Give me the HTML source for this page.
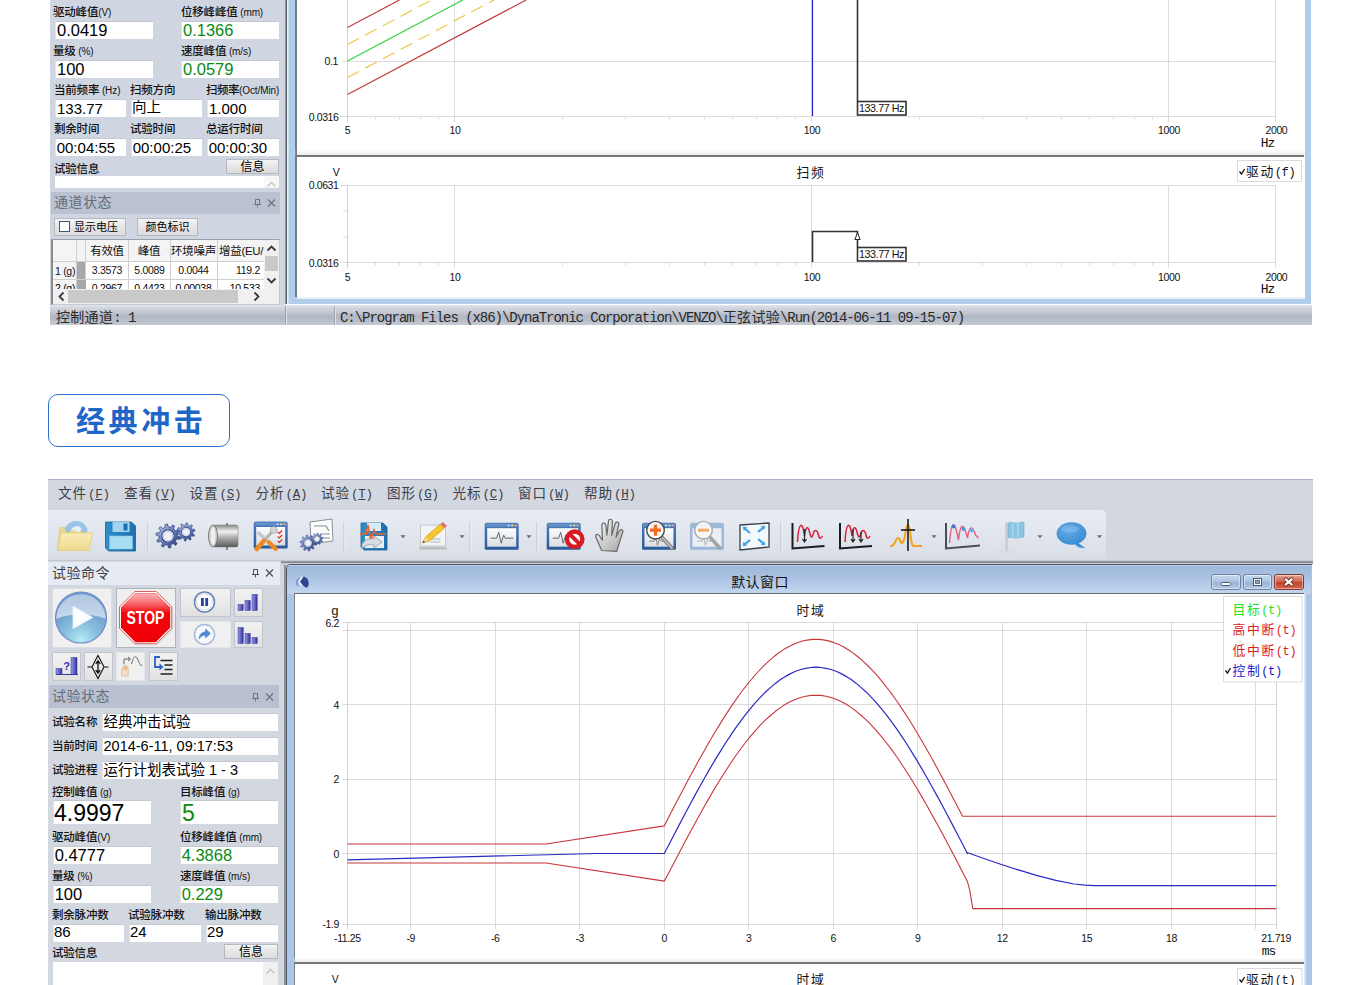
<!DOCTYPE html>
<html lang="zh"><head><meta charset="utf-8"><title>VENZO</title>
<style>
*{box-sizing:border-box;margin:0;padding:0}
html,body{width:1360px;height:985px;overflow:hidden;background:#fff}
body{position:relative;font-family:"Liberation Sans","Noto Sans CJK SC",sans-serif;color:#000}
.a{position:absolute}
.t{position:absolute;white-space:nowrap;line-height:1}
.lbl{position:absolute;white-space:nowrap;font-size:11.5px;line-height:14px;height:14px;color:#111;letter-spacing:-0.2px;font-weight:500}
.lbl i{font-style:normal;font-weight:400;font-size:10px;letter-spacing:-0.1px}
.inp{position:absolute;background:#fff;white-space:nowrap;overflow:hidden;border-top:1px solid #c3c8d2;border-left:1px solid #dfe3ea}
.inp span{position:absolute;left:2px;top:0;line-height:1}
.g{color:#0b8a12}
.hdr{position:absolute;font-size:14px;letter-spacing:0.5px;line-height:1;white-space:nowrap}
.btn{position:absolute;background:linear-gradient(#f4f4f4,#e6e6e6 50%,#dcdcdc);border:1px solid #b4b8c0;font-size:12px;text-align:center;white-space:nowrap}
.mono{font-family:"Liberation Mono","Noto Sans CJK SC",monospace}
.ax{font-size:10.5px;fill:#111;letter-spacing:-0.4px;font-family:"Liberation Sans","Noto Sans CJK SC",sans-serif}
svg{position:absolute;overflow:visible}
svg text{white-space:pre}
</style></head>
<body>
<div class="a" style="left:50px;top:0px;width:235px;height:305px;background:#d0d6e1"></div>
<div class="a" style="left:288px;top:0px;width:1022.5px;height:304px;background:#b1cdec"></div>
<div class="a" style="left:296px;top:0px;width:1009px;height:297px;background:#fff"></div>
<div class="a" style="left:296px;top:150px;width:1009px;height:5px;background:linear-gradient(#fff,#ececec)"></div>
<div class="a" style="left:296px;top:155px;width:1007.5px;height:2px;background:#777"></div>
<div class="a" style="left:296px;top:297px;width:1009px;height:1.5px;background:#e9f1fa"></div>
<div class="a" style="left:284px;top:0px;width:13px;height:150px;background:linear-gradient(90deg,#d0d6e1 0,#d0d6e1 .8px,#9a9ea6 .8px,#8d9199 1.8px,#5c6068 2px,#5c6068 3.3px,#e8f2fb 3.5px,#e8f2fb 4.4px,#b1cdec 4.6px,#b1cdec 11.2px,#737a85 11.3px,#737a85 12.8px,#fff 12.9px)"></div>
<div class="a" style="left:284px;top:150px;width:13px;height:7px;background:linear-gradient(90deg,#d0d6e1 0,#d0d6e1 .8px,#9a9ea6 .8px,#8d9199 1.8px,#5c6068 2px,#5c6068 3.3px,#e8f2fb 3.5px,#e8f2fb 4.4px,#b1cdec 4.6px,#b1cdec 11.2px,#8a9099 11.3px,#777 12.8px)"></div>
<div class="a" style="left:284px;top:157px;width:13px;height:140px;background:linear-gradient(90deg,#d0d6e1 0,#d0d6e1 .8px,#9a9ea6 .8px,#8d9199 1.8px,#5c6068 2px,#5c6068 3.3px,#e8f2fb 3.5px,#e8f2fb 4.4px,#b1cdec 4.6px,#b1cdec 11.2px,#737a85 11.3px,#737a85 12.8px,#fff 12.9px)"></div>
<div class="a" style="left:284px;top:297px;width:13px;height:7px;background:linear-gradient(90deg,#d0d6e1 0,#d0d6e1 .8px,#9a9ea6 .8px,#8d9199 1.8px,#5c6068 2px,#5c6068 3.3px,#e8f2fb 3.5px,#e8f2fb 4.4px,#b1cdec 4.6px)"></div>
<div class="lbl" style="left:53px;top:5px;">驱动峰值<i>(V)</i></div>
<div class="lbl" style="left:181px;top:5px;">位移峰峰值<i> (mm)</i></div>
<div class="inp" style="left:55px;top:21px;width:98px;height:18px"><span style="font-size:16.5px;top:0.2px;left:1px">0.0419</span></div>
<div class="inp" style="left:181px;top:21px;width:98px;height:18px"><span class="g" style="font-size:16.5px;top:0.2px;left:1px">0.1366</span></div>
<div class="lbl" style="left:53px;top:44px;">量级<i> (%)</i></div>
<div class="lbl" style="left:181px;top:44px;">速度峰值<i> (m/s)</i></div>
<div class="inp" style="left:55px;top:60px;width:98px;height:18px"><span style="font-size:16.5px;top:0.2px;left:1px">100</span></div>
<div class="inp" style="left:181px;top:60px;width:98px;height:18px"><span class="g" style="font-size:16.5px;top:0.2px;left:1px">0.0579</span></div>
<div class="lbl" style="left:54px;top:83px;">当前频率<i> (Hz)</i></div>
<div class="lbl" style="left:130px;top:83px;">扫频方向</div>
<div class="lbl" style="left:206px;top:83px;letter-spacing:-0.5px">扫频率<i>(Oct/Min)</i></div>
<div class="inp" style="left:55px;top:99px;width:71px;height:18px"><span style="font-size:15px;top:1.0px;left:1px">133.77</span></div>
<div class="inp" style="left:131px;top:99px;width:71px;height:18px"><span style="font-size:14.5px;top:0.2px;left:0px">向上</span></div>
<div class="inp" style="left:207px;top:99px;width:72px;height:18px"><span style="font-size:15px;top:1.0px;left:1px">1.000</span></div>
<div class="lbl" style="left:54px;top:122px;">剩余时间</div>
<div class="lbl" style="left:130px;top:122px;">试验时间</div>
<div class="lbl" style="left:206px;top:122px;">总运行时间</div>
<div class="inp" style="left:55px;top:138px;width:71px;height:18px"><span style="font-size:15px;top:1.0px;left:0.7px">00:04:55</span></div>
<div class="inp" style="left:131px;top:138px;width:71px;height:18px"><span style="font-size:15px;top:1.0px;left:0.7px">00:00:25</span></div>
<div class="inp" style="left:207px;top:138px;width:72px;height:18px"><span style="font-size:15px;top:1.0px;left:0.7px">00:00:30</span></div>
<div class="lbl" style="left:54px;top:162px;">试验信息</div>
<div class="btn" style="left:226px;top:159px;width:53px;height:15px;line-height:15px;font-size:12px">信息</div>
<div class="a" style="left:55px;top:176px;width:224px;height:12px;background:#fff"></div>
<div class="a" style="left:264px;top:176px;width:15px;height:12px;background:#f7f7f7"></div>
<svg style="left:266px;top:180px" width="11" height="8"><path d="M1.5 6.5 L5.5 2.5 L9.5 6.5" fill="none" stroke="#c4c4c4" stroke-width="1.3"/></svg>
<div class="a" style="left:51px;top:192px;width:229px;height:22px;background:#bac2d1"></div>
<div class="hdr" style="left:54px;top:195px;color:#666c78">通道状态</div>
<svg style="left:252px;top:197px" width="26" height="12"><g fill="none" stroke="#6d7480" stroke-width="1"><path d="M3.5 2.5h4v5h-4z M2 7.5h7 M5.5 7.5v3"/><path d="M16 2.5l7 7M23 2.5l-7 7" stroke-width="1.2"/></g></svg>
<div class="btn" style="left:54px;top:218px;width:72px;height:18px;line-height:16px;font-size:11.5px;padding-left:19px;text-align:left;font-size:11px">显示电压</div>
<div class="a" style="left:59px;top:221px;width:11px;height:11px;background:#fff;border:1px solid #3c5a78"></div>
<div class="btn" style="left:137px;top:218px;width:61px;height:18px;line-height:16px;font-size:11px">颜色标识</div>
<div class="a" style="left:51px;top:239px;width:229px;height:66px;background:#fff;border:1px solid #9aa0aa;border-left:2px solid #8c8c8c;border-right-color:#c5c9d0;border-bottom-color:#c5c9d0"></div>
<div class="a" style="left:53px;top:240px;width:211px;height:21px;background:#f4f4f4"></div>
<div class="a" style="left:53px;top:261px;width:24px;height:28px;background:#f4f4f4"></div>
<div class="a" style="left:77px;top:261px;width:9px;height:28px;background:#a8a8a8"></div>
<div class="a" style="left:76px;top:240px;width:1px;height:49px;background:#cfcfcf"></div>
<div class="a" style="left:85px;top:240px;width:1px;height:49px;background:#cfcfcf"></div>
<div class="a" style="left:128px;top:240px;width:1px;height:49px;background:#cfcfcf"></div>
<div class="a" style="left:170px;top:240px;width:1px;height:49px;background:#cfcfcf"></div>
<div class="a" style="left:217px;top:240px;width:1px;height:49px;background:#cfcfcf"></div>
<div class="a" style="left:53px;top:261px;width:211px;height:1px;background:#cfcfcf"></div>
<div class="a" style="left:53px;top:279px;width:211px;height:1px;background:#cfcfcf"></div>
<div class="t" style="left:107px;top:246.2px;font-size:11.5px;transform:translate(-50%,0);color:#111;letter-spacing:-0.3px">有效值</div>
<div class="t" style="left:149px;top:246.2px;font-size:11.5px;transform:translate(-50%,0);color:#111;letter-spacing:-0.3px">峰值</div>
<div class="t" style="left:193.5px;top:246.2px;font-size:11.5px;transform:translate(-50%,0);color:#111;letter-spacing:-0.3px">环境噪声</div>
<div class="t" style="left:219px;top:246.2px;font-size:11.5px;transform:none;color:#111;letter-spacing:-0.3px">增益(EU/</div>
<div class="t" style="left:55px;top:265.8px;font-size:10.5px;transform:none;color:#111;letter-spacing:-0.3px">1 (g)</div>
<div class="t" style="left:107px;top:265.2px;font-size:10.5px;transform:translate(-50%,0);color:#111;letter-spacing:-0.3px">3.3573</div>
<div class="t" style="left:149.5px;top:265.2px;font-size:10.5px;transform:translate(-50%,0);color:#111;letter-spacing:-0.3px">5.0089</div>
<div class="t" style="left:193.5px;top:265.2px;font-size:10.5px;transform:translate(-50%,0);color:#111;letter-spacing:-0.3px">0.0044</div>
<div class="t" style="left:260px;top:265.2px;font-size:10.5px;transform:translate(-100%,0);color:#111;letter-spacing:-0.3px">119.2</div>
<div class="a" style="left:54px;top:280px;width:210px;height:8.500px;overflow:hidden"><div class="t" style="left:1px;top:2.5px;font-size:10.5px;letter-spacing:-0.3px">2 (g)</div><div class="t" style="left:53px;top:2.5px;font-size:10.5px;transform:translate(-50%,0);letter-spacing:-0.3px">0.2967</div><div class="t" style="left:95.5px;top:2.5px;font-size:10.5px;transform:translate(-50%,0);letter-spacing:-0.3px">0.4423</div><div class="t" style="left:139.5px;top:2.5px;font-size:10.5px;transform:translate(-50%,0);letter-spacing:-0.3px">0.00038</div><div class="t" style="left:206px;top:2.5px;font-size:10.5px;transform:translate(-100%,0);letter-spacing:-0.3px">10.533</div></div>
<div class="a" style="left:77px;top:280px;width:9px;height:9px;background:#a8a8a8"></div>
<div class="a" style="left:264px;top:240px;width:15px;height:49px;background:#f0f0f0"></div>
<div class="a" style="left:265px;top:256px;width:13px;height:15px;background:#c9c9c9"></div>
<svg style="left:266px;top:243px" width="11" height="46"><g fill="none" stroke="#3a3a3a" stroke-width="1.800"><path d="M1.5 7.5L5.5 3.5L9.5 7.5"/><path d="M1.5 35.5L5.5 39.5L9.5 35.5"/></g></svg>
<div class="a" style="left:53px;top:289px;width:226px;height:15px;background:#f0f0f0"></div>
<div class="a" style="left:68px;top:290px;width:170px;height:13px;background:#c9c9c9"></div>
<svg style="left:56px;top:291px" width="210" height="11"><g fill="none" stroke="#3a3a3a" stroke-width="1.800"><path d="M7.5 1.5L3.5 5.5L7.5 9.5"/><path d="M198.5 1.5L202.5 5.5L198.5 9.5"/></g></svg>
<div class="a" style="left:50px;top:305px;width:1262px;height:20px;background:linear-gradient(#e3e6ec 0,#d3d7df 12%,#c0c5cf 40%,#b1b7c3 55%,#b9bfca 80%,#c6cbd4 100%)"></div>
<div class="a" style="left:285px;top:306px;width:1px;height:19px;background:#9da3ad"></div>
<div class="a" style="left:286px;top:306px;width:1px;height:19px;background:#e0e3e9"></div>
<div class="a" style="left:334px;top:306px;width:1px;height:19px;background:#9da3ad"></div>
<div class="a" style="left:335px;top:306px;width:1px;height:19px;background:#e0e3e9"></div>
<div class="t mono" style="left:56px;top:310.500px;font-size:14px;color:#2a2a2a;letter-spacing:0.3px">控制通道<span style="letter-spacing:-1px">: 1</span></div>
<div class="t mono" style="left:340px;top:310.500px;font-size:14px;color:#2a2a2a;letter-spacing:-1.04px">C:\Program Files (x86)\DynaTronic Corporation\VENZO\<span style="letter-spacing:0.3px">正弦试验</span>\Run(2014-06-11 09-15-07)</div>
<svg style="left:0;top:0" width="1360" height="330" viewBox="0 0 1360 330">
<g stroke="#dcdcdc" stroke-width="1" fill="none"><path d="M454.5 0V122"/><path d="M811.5 0V122"/><path d="M1168.5 0V122"/><path d="M1275.5 0V122"/><path d="M347.5 61.5H1275.5"/><path d="M340 116.5H1275.5"/><path d="M347.5 0V122" stroke="#d2d2d2"/><path d="M375.5 116.5v3"/><path d="M375.5 262.5v3"/><path d="M399.5 116.5v3"/><path d="M399.5 262.5v3"/><path d="M420.5 116.5v3"/><path d="M420.5 262.5v3"/><path d="M438.5 116.5v3"/><path d="M438.5 262.5v3"/><path d="M562.5 116.5v3"/><path d="M562.5 262.5v3"/><path d="M625.5 116.5v3"/><path d="M625.5 262.5v3"/><path d="M669.5 116.5v3"/><path d="M669.5 262.5v3"/><path d="M704.5 116.5v3"/><path d="M704.5 262.5v3"/><path d="M732.5 116.5v3"/><path d="M732.5 262.5v3"/><path d="M756.5 116.5v3"/><path d="M756.5 262.5v3"/><path d="M777.5 116.5v3"/><path d="M777.5 262.5v3"/><path d="M795.5 116.5v3"/><path d="M795.5 262.5v3"/><path d="M919.5 116.5v3"/><path d="M919.5 262.5v3"/><path d="M982.5 116.5v3"/><path d="M982.5 262.5v3"/><path d="M1026.5 116.5v3"/><path d="M1026.5 262.5v3"/><path d="M1061.5 116.5v3"/><path d="M1061.5 262.5v3"/><path d="M1089.5 116.5v3"/><path d="M1089.5 262.5v3"/><path d="M1113.5 116.5v3"/><path d="M1113.5 262.5v3"/><path d="M1134.5 116.5v3"/><path d="M1134.5 262.5v3"/><path d="M1152.5 116.5v3"/><path d="M1152.5 262.5v3"/><path d="M342 61.5h5"/></g>
<path d="M347.5 27.5L399.5 0" stroke="#c23a3a" stroke-width="1.2" fill="none"/><path d="M347.5 44.5L431.6 0" stroke="#ecc84a" stroke-width="1.2" fill="none" stroke-dasharray="13 7"/><path d="M347.5 61L462.8 0" stroke="#35d23c" stroke-width="1.2" fill="none"/><path d="M347.5 77.5L494.0 0" stroke="#ecc84a" stroke-width="1.2" fill="none" stroke-dasharray="13 7"/><path d="M347.5 94.5L526.1 0" stroke="#c23a3a" stroke-width="1.2" fill="none"/><path d="M812.5 0V116" stroke="#2424c8" stroke-width="1.2"/><path d="M857.5 0V101" stroke="#333" stroke-width="1.600"/><rect x="857.5" y="101.5" width="48.5" height="13.5" fill="#fff" stroke="#333" stroke-width="1.600"/><text class="ax" x="859" y="112.3" font-size="10.5" textLength="45" lengthAdjust="spacingAndGlyphs">133.77 Hz</text><text class="ax" x="338" y="65" text-anchor="end">0.1</text><text class="ax" x="338.5" y="120.5" text-anchor="end">0.0316</text><text class="ax" x="347.5" y="134" text-anchor="middle">5</text><text class="ax" x="347.5" y="280.5" text-anchor="middle">5</text><text class="ax" x="455.0" y="134" text-anchor="middle">10</text><text class="ax" x="455.0" y="280.5" text-anchor="middle">10</text><text class="ax" x="812.0" y="134" text-anchor="middle">100</text><text class="ax" x="812.0" y="280.5" text-anchor="middle">100</text><text class="ax" x="1169.0" y="134" text-anchor="middle">1000</text><text class="ax" x="1169.0" y="280.5" text-anchor="middle">1000</text><text class="ax" x="1276.4" y="134" text-anchor="middle">2000</text><text class="ax" x="1276.4" y="280.5" text-anchor="middle">2000</text><text class="mono" x="1267.5" y="146.5" text-anchor="middle" font-size="13" fill="#111" style="letter-spacing:-1px">Hz</text><text class="mono" x="1267.5" y="292.5" text-anchor="middle" font-size="13" fill="#111" style="letter-spacing:-1px">Hz</text><g stroke="#dcdcdc" stroke-width="1" fill="none"><path d="M454.5 185.5V268"/><path d="M811.5 185.5V268"/><path d="M1168.5 185.5V268"/><path d="M1275.5 185.5V268"/><path d="M340 185.5H1275.5"/><path d="M340 262.5H1275.5"/><path d="M347.5 185.5V268" stroke="#d2d2d2"/><path d="M343 211h4M343 237h4"/></g>
<text class="ax" x="336" y="175.5" text-anchor="middle" font-size="12">V</text><text class="ax" x="338.5" y="189" text-anchor="end">0.0631</text><text class="ax" x="338.5" y="266.5" text-anchor="end">0.0316</text><text x="811" y="176.5" text-anchor="middle" font-size="12.800" fill="#111" class="mono" style="letter-spacing:1.700px">扫频</text><path d="M812.5 262V231.5H857.5V247" stroke="#333" stroke-width="1.600" fill="none"/><path d="M857.5 232.5l2.6 7h-5.2z" fill="#fff" stroke="#222" stroke-width="1"/><rect x="857.5" y="247.5" width="48.5" height="13.5" fill="#fff" stroke="#333" stroke-width="1.600"/><text class="ax" x="859" y="258.3" font-size="10.5" textLength="45" lengthAdjust="spacingAndGlyphs">133.77 Hz</text><rect x="1237.5" y="160.5" width="64" height="21" fill="#fff" stroke="#dadada"/><path d="M1239.5 171.5l2 2.5l3-5" stroke="#111" stroke-width="1.3" fill="none"/><text x="1246" y="175.500" font-size="12.800" fill="#111" class="mono" style="letter-spacing:1.700px">驱动<tspan dx="-0.300" font-size="12" style="letter-spacing:-0.300px">(f)</tspan></text></svg>
<div class="a" style="left:48px;top:394px;width:182px;height:52.600px;border:1.5px solid #2a72cf;border-radius:10px;background:#fff"></div>
<div class="t" style="left:76px;top:408.400px;font-size:29px;font-weight:bold;color:#1f66c9;letter-spacing:3.600px;font-family:'Liberation Sans','Noto Sans CJK SC',sans-serif">经典冲击</div>
<div class="a" style="left:48px;top:479px;width:1265px;height:84px;background:#d2d7e0"></div>
<div class="a" style="left:48px;top:563px;width:1263.5px;height:422px;background:#d2d7e0"></div>
<div class="a" style="left:48px;top:479px;width:1265px;height:1px;background:#aab4c4"></div>
<div class="t mono" style="left:58px;top:488.200px;font-size:13.600px;color:#3a3f48;letter-spacing:0.900px">文件<span style="font-size:12.500px;letter-spacing:-0.300px;margin-left:1px">(<u>F</u>)</span></div>
<div class="t mono" style="left:124px;top:488.200px;font-size:13.600px;color:#3a3f48;letter-spacing:0.900px">查看<span style="font-size:12.500px;letter-spacing:-0.300px;margin-left:1px">(<u>V</u>)</span></div>
<div class="t mono" style="left:189.5px;top:488.200px;font-size:13.600px;color:#3a3f48;letter-spacing:0.900px">设置<span style="font-size:12.500px;letter-spacing:-0.300px;margin-left:1px">(<u>S</u>)</span></div>
<div class="t mono" style="left:255.5px;top:488.200px;font-size:13.600px;color:#3a3f48;letter-spacing:0.900px">分析<span style="font-size:12.500px;letter-spacing:-0.300px;margin-left:1px">(<u>A</u>)</span></div>
<div class="t mono" style="left:321px;top:488.200px;font-size:13.600px;color:#3a3f48;letter-spacing:0.900px">试验<span style="font-size:12.500px;letter-spacing:-0.300px;margin-left:1px">(<u>T</u>)</span></div>
<div class="t mono" style="left:387px;top:488.200px;font-size:13.600px;color:#3a3f48;letter-spacing:0.900px">图形<span style="font-size:12.500px;letter-spacing:-0.300px;margin-left:1px">(<u>G</u>)</span></div>
<div class="t mono" style="left:452.5px;top:488.200px;font-size:13.600px;color:#3a3f48;letter-spacing:0.900px">光标<span style="font-size:12.500px;letter-spacing:-0.300px;margin-left:1px">(<u>C</u>)</span></div>
<div class="t mono" style="left:518px;top:488.200px;font-size:13.600px;color:#3a3f48;letter-spacing:0.900px">窗口<span style="font-size:12.500px;letter-spacing:-0.300px;margin-left:1px">(<u>W</u>)</span></div>
<div class="t mono" style="left:584px;top:488.200px;font-size:13.600px;color:#3a3f48;letter-spacing:0.900px">帮助<span style="font-size:12.500px;letter-spacing:-0.300px;margin-left:1px">(<u>H</u>)</span></div>
<div class="a" style="left:48px;top:510px;width:1058px;height:51px;background:linear-gradient(#e9edf4,#e1e6ee 50%,#d7dce6);border-radius:0 5px 5px 0"></div>
<div class="a" style="left:48px;top:560px;width:1265px;height:1px;background:#c3c7cf"></div>
<div class="a" style="left:281px;top:561px;width:1032px;height:2px;background:linear-gradient(#a4a9b1,#777c84)"></div>
<div class="a" style="left:281px;top:563px;width:1032px;height:2px;background:#c9ced8"></div>
<svg style="left:48px;top:510px" width="1060" height="52" viewBox="48 510 1060 52">
<defs>
<linearGradient id="fy" x1="0" y1="0" x2="0" y2="1"><stop offset="0" stop-color="#f8edb8"/><stop offset="1" stop-color="#efd98e"/></linearGradient>
<linearGradient id="fb" x1="0" y1="0" x2="1" y2="1"><stop offset="0" stop-color="#7fb6e6"/><stop offset="1" stop-color="#3e86cc"/></linearGradient>
<linearGradient id="sv" x1="0" y1="0" x2="1" y2="0"><stop offset="0" stop-color="#2f8fca"/><stop offset="1" stop-color="#1f6fae"/></linearGradient>
<linearGradient id="gr" x1="0" y1="0" x2="1" y2="1"><stop offset="0" stop-color="#c9d6ee"/><stop offset=".45" stop-color="#6f86c2"/><stop offset="1" stop-color="#26377a"/></linearGradient>
<linearGradient id="cy" x1="0" y1="0" x2="0" y2="1"><stop offset="0" stop-color="#8a8a8a"/><stop offset=".3" stop-color="#f2f2f2"/><stop offset=".6" stop-color="#a8a8a8"/><stop offset="1" stop-color="#5a5a5a"/></linearGradient>
<linearGradient id="wn" x1="0" y1="0" x2="0" y2="1"><stop offset="0" stop-color="#4a7cbc"/><stop offset="1" stop-color="#2b5a98"/></linearGradient>
<linearGradient id="wb" x1="0" y1="0" x2="0" y2="1"><stop offset="0" stop-color="#fdfdfd"/><stop offset="1" stop-color="#d9dde2"/></linearGradient>
<linearGradient id="hd" x1="0" y1="0" x2="1" y2="1"><stop offset="0" stop-color="#fafafa"/><stop offset="1" stop-color="#a9a9a9"/></linearGradient>
<radialGradient id="bb" cx="40%" cy="35%" r="70%"><stop offset="0" stop-color="#62aae4"/><stop offset="1" stop-color="#3a8cd4"/></radialGradient>
<g id="dd"><path d="M-2.600 -1.200h5.200l-2.600 3z" fill="#666c77"/></g>
<g id="win"><path d="M-17 -11.500q0-2 2-2h30q2 0 2 2v23.500q0 1.500-1.500 1.500h-31q-1.500 0-1.500-1.500z" fill="url(#wn)"/><path d="M-16 -12.500h32v3h-32z" fill="#7fa3d4" opacity=".55"/><rect x="-14.500" y="-8" width="29" height="18.500" fill="url(#wb)"/><circle cx="7" cy="-10.700" r="1.100" fill="#b9dcff"/><circle cx="10.500" cy="-10.700" r="1.100" fill="#ffd76a"/><circle cx="14" cy="-10.700" r="1.100" fill="#ff9a6a"/></g>
<g id="gear"><path d="M7.60 0.00L9.97 0.75L9.65 2.61L7.17 2.53L6.15 4.47L7.62 6.47L6.28 7.78L4.31 6.26L2.35 7.23L2.36 9.72L0.50 9.99L-0.19 7.60L-2.35 7.23L-3.80 9.25L-5.46 8.38L-4.62 6.03L-6.15 4.47L-8.51 5.25L-9.34 3.56L-7.28 2.17L-7.60 0.00L-9.97 -0.75L-9.65 -2.61L-7.17 -2.53L-6.15 -4.47L-7.62 -6.47L-6.28 -7.78L-4.31 -6.26L-2.35 -7.23L-2.36 -9.72L-0.50 -9.99L0.19 -7.60L2.35 -7.23L3.80 -9.25L5.46 -8.38L4.62 -6.03L6.15 -4.47L8.51 -5.25L9.34 -3.56L7.28 -2.17z" fill="url(#gr)" stroke="#2b3a78" stroke-width=".6" stroke-linejoin="round"/><circle r="5.200" fill="#eef1f7" stroke="#34447f" stroke-width=".9"/><circle r="3.800" fill="none" stroke="#b9c3dc" stroke-width=".8"/></g>
</defs>
<path d="M148 522v29" stroke="#b9bec8" stroke-width="1"/><path d="M149 522v29" stroke="#f3f5f9" stroke-width="1"/><path d="M344 522v29" stroke="#b9bec8" stroke-width="1"/><path d="M345 522v29" stroke="#f3f5f9" stroke-width="1"/><path d="M470 522v29" stroke="#b9bec8" stroke-width="1"/><path d="M471 522v29" stroke="#f3f5f9" stroke-width="1"/><path d="M537 522v29" stroke="#b9bec8" stroke-width="1"/><path d="M538 522v29" stroke="#f3f5f9" stroke-width="1"/><path d="M781 522v29" stroke="#b9bec8" stroke-width="1"/><path d="M782 522v29" stroke="#f3f5f9" stroke-width="1"/><use href="#dd" x="403" y="536.500"/><use href="#dd" x="462" y="536.500"/><use href="#dd" x="529" y="536.500"/><use href="#dd" x="934" y="536.500"/><use href="#dd" x="1040" y="536.500"/><use href="#dd" x="1099.5" y="536.500"/><g transform="translate(74.500 535.500)"><path d="M-17 14l2-22h8l2.500 3h17l-1 19z" fill="#ecd88e" stroke="#dcc47a" stroke-width=".6"/><path d="M-10 -5c2-9 12-12 19-7c3 2 4 5 4 8l-6 1c0-5-5-7-9-4c-2 1-3 3-3 5z" fill="#8fc0e8" opacity=".9"/><path d="M-3 -6c2-4 7-5 10-1l-2 4z" fill="#e6f1fa"/><path d="M-13.500 -2.500h31.500l-3.500 17.500h-31.500z" fill="url(#fy)" stroke="#e0c878" stroke-width=".7"/></g><g transform="translate(120.500 536)"><path d="M-15 -14h26l4 4v25h-27l-3 -3z" fill="url(#sv)" stroke="#1a5f98" stroke-width=".8"/><rect x="-8" y="-14" width="17" height="10" fill="#9fd3ee"/><rect x="3" y="-12.500" width="4" height="7" fill="#1f6fae"/><rect x="-11" y="0" width="23" height="13" fill="#a8ddf2" stroke="#7cc2e4" stroke-width=".6"/></g><g transform="translate(168 536) scale(1.200)"><use href="#gear"/></g><g transform="translate(186 532) scale(.900) rotate(14)"><use href="#gear"/></g><g transform="translate(224 536)"><rect x="-11" y="-11" width="25" height="22" rx="2" fill="url(#cy)" stroke="#777" stroke-width=".5"/><ellipse cx="-11" cy="0" rx="4.500" ry="11" fill="#c9c9c9" stroke="#6a6a6a" stroke-width=".8"/><ellipse cx="-11" cy="0" rx="2.500" ry="9" fill="#eee"/><path d="M3 -13v2M3 11v3" stroke="#666" stroke-width="1.500"/></g><g transform="translate(270.700 535)"><use href="#win"/><path d="M7 -3l1.500 1.500l3-3M7 1.500l1.500 1.500l3-3M7 6l1.500 1.500l3-3" fill="none" stroke="#d03030" stroke-width="1.200"/><path d="M-12 -2l16 15" stroke="#c8c8c8" stroke-width="3.500" stroke-linecap="round"/><path d="M-2 7l7 7" stroke="#f08a1c" stroke-width="4" stroke-linecap="round"/><path d="M2 -4l-14 16" stroke="#b5b5b5" stroke-width="3" stroke-linecap="round"/><path d="M-7 6l-7 8" stroke="#f08a1c" stroke-width="4.500" stroke-linecap="round"/><circle cx="3" cy="-5" r="3.500" fill="#d5d5d5" stroke="#9a9a9a" stroke-width=".6"/></g><g transform="translate(317 535)"><path d="M-7 -13l22-3l1 22l-22 3z" fill="#fbfbfb" stroke="#8a8f98" stroke-width="1"/><path d="M-3 -9h12l3 5M3 -1h10M3 3h10" fill="none" stroke="#8a919c" stroke-width="1.200"/><g transform="translate(-9 8) scale(.800)"><use href="#gear"/></g><g transform="translate(0 4) scale(.600) rotate(15)"><use href="#gear"/></g></g><g transform="translate(374 536)"><path d="M-13 -13h22l4 4v23h-23l-3 -3z" fill="url(#sv)" stroke="#1a5f98" stroke-width=".8"/><rect x="-7" y="-13" width="14" height="8" fill="#d6ecf8"/><rect x="-9" y="0" width="19" height="12" fill="#e8eef2"/><path d="M-14 -2h6l2-9l3 16l3-11l2 4h10" fill="none" stroke="#f0642a" stroke-width="1.600"/><path d="M-12 8c3-5 8-6 12-5v-3l8 6l-8 6v-3c-5-1-9 0-12 4z" fill="#d8dde2" stroke="#8a929c" stroke-width=".7"/></g><g transform="translate(432.500 536)"><path d="M-12 -11h22l3 3v18h-25z" fill="#f4f4f4" stroke="#b9bcc2" stroke-width=".8"/><path d="M-13 11h27v2.500h-27z" fill="#bdbdbd"/><path d="M-4 3h12M-2 6h10" stroke="#a9b3c0" stroke-width="1.200"/><path d="M-10 7l3-6l15-13l4 4l-15 13z" fill="#f6c530" stroke="#c99a1a" stroke-width=".7"/><path d="M8 -12l2.500-2l4 4l-2.500 2z" fill="#e46a7a"/><path d="M-10 7l3-6l3 3.500z" fill="#f2d9b0"/><path d="M-10 7l1.200-2.400l1.300 1.400z" fill="#333"/></g><g transform="translate(501.700 536.200)"><use href="#win"/><path d="M-11 2h6l2-6l2.500 11l2.500-8l1.500 3h8" fill="none" stroke="#666" stroke-width="1"/></g><g transform="translate(563.700 536.200)"><use href="#win"/><path d="M-11 2h6l2-6l2.500 11l2.500-8l1.500 3h8" fill="none" stroke="#666" stroke-width="1"/><circle cx="11" cy="3" r="7.700" fill="#fff" stroke="#d81a22" stroke-width="4.400"/><path d="M5.500 -2.500l11 11" stroke="#d81a22" stroke-width="4"/></g><g transform="translate(612 536) scale(1.150 1.080) rotate(4)"><path d="M-8 14l-6-12c-1-2.500 1.500-3.500 3-1.500l3 4l-1.500-14c0-2.500 3-2.500 3.500 0l1.500 9l.5-13c0-2.500 3.200-2.500 3.400 0l.3 13l2.200-11c.5-2.500 3.500-2 3.200 .5l-1.600 12l2.500-6c1-2.500 3.800-1.500 3 1l-4 18z" fill="url(#hd)" stroke="#6d6d6d" stroke-width="1.100" stroke-linejoin="round"/></g><g transform="translate(659 536.200)"><use href="#win"/><path d="M-10 5h5l1.500-4l2 8l2-6l1.500 2h7" fill="none" stroke="#888" stroke-width="1"/><path d="M3 1l10 11" stroke="#7d7d7d" stroke-width="3.600" stroke-linecap="round"/><path d="M3 1l10 11" stroke="#c9c9c9" stroke-width="1.400" stroke-linecap="round"/><circle cx="-3.500" cy="-6" r="8.800" fill="#fdfdfd" fill-opacity=".9" stroke="#4a4a4a" stroke-width="1.400"/><path d="M-9 -6h11M-3.500 -11.500v11" stroke="#f26a1b" stroke-width="3.200"/></g><g transform="translate(707 536.200)" opacity=".85"><path d="M-17 -11.500q0-2 2-2h30q2 0 2 2v23.500q0 1.500-1.500 1.500h-31q-1.500 0-1.500-1.500z" fill="#90b0d8"/><rect x="-14.500" y="-8" width="29" height="18.500" fill="#eef1f5"/><path d="M-10 5h5l1.500-4l2 8l2-6l1.500 2h7" fill="none" stroke="#aaa" stroke-width="1"/><path d="M3 1l10 11" stroke="#9a9a9a" stroke-width="3.600" stroke-linecap="round"/><circle cx="-3.500" cy="-6" r="8.800" fill="#fdfdfd" fill-opacity=".9" stroke="#a0a0a0" stroke-width="1.400"/><path d="M-9 -6h11" stroke="#f2a04b" stroke-width="3"/></g><g transform="translate(754 536)"><path d="M-14 -11l29-2l0 24l-29 3z" fill="#f3f8fc" stroke="#3a3f47" stroke-width="1.300"/><g stroke="#3fa2e4" stroke-width="2.200" fill="#3fa2e4"><path d="M-4 -3l-6-5M4 -4l6-5M-4 4l-6 5M4 3l6 5"/><path d="M-11 -9l4 .300l-3 3.200zM11 -10l-4 .500l3.200 3zM-11 10l.500-4l3.200 3.200zM11 9l-4-.300l3.200-3z" stroke-width=".5"/></g></g><g transform="translate(807.500 536)"><path d="M-15 -13v25.500l32-2.500" fill="none" stroke="#1c1c1c" stroke-width="2"/><path d="M-10 6c1-20 5-22 7-6c1-8 3-12 5-4s3 5 4 1s4-3 5 2s3 3 4 1" fill="none" stroke="#d8203a" stroke-width="1.500"/><path d="M-3 -7v13M-5 3l2 3l2-3" fill="none" stroke="#222" stroke-width="1.200"/></g><g transform="translate(855 536)"><path d="M-15 -13v25.500l32-2.500" fill="none" stroke="#1c1c1c" stroke-width="2"/><path d="M-10 6c1-20 5-22 7-6c1-8 3-12 5-4s3 5 4 1s4-3 5 2s3 3 4 1" fill="none" stroke="#d8203a" stroke-width="1.500"/><path d="M-2 -7v13M-4 3l2 3l2-3M6 -4v10M4 3l2 3l2-3" fill="none" stroke="#222" stroke-width="1.200"/></g><g transform="translate(905 536)"><path d="M-15 10c6 1 5-8 8-8s2 8 5 4s2-17 5-17s2 22 6 21h8" fill="none" stroke="#f4a21c" stroke-width="2"/><path d="M3 -17v32M-4 -6h14" stroke="#111" stroke-width="1.500"/></g><g transform="translate(962.500 536)"><path d="M-16.500 -13v25.500l34-3" fill="none" stroke="#4a4d55" stroke-width="2"/><path d="M-13 7c2-24 5-24 9-3c2-18 5-18 9-2c2-13 5-13 8-3l3 3" fill="none" stroke="#e0607c" stroke-width="1.400"/><circle cx="-9" cy="-9.500" r="1.900" fill="#4a76c8"/><circle cx="1" cy="-7" r="1.900" fill="#5a8ed8"/><circle cx="9.500" cy="-5.500" r="1.900" fill="#59b4e8"/></g><g transform="translate(1013 536)"><ellipse cx="-6" cy="15" rx="8" ry="2" fill="#d8dce3"/><path d="M-6.500 -14v29" stroke="#c5c9d0" stroke-width="2.200"/><path d="M-5 -13c4-2 7 1 10 0s4-1 6-1v15c-3 0-4 1-6 1c-3 1-6-2-10 0z" fill="#8cc4e2" stroke="#6fb0d4" stroke-width=".6"/><path d="M0 -13.500v15M5 -13v15" stroke="#b4dcf0" stroke-width="1.500" opacity=".8"/></g><g transform="translate(1072 535)"><path d="M5 7l8 6c-5 0-8-1-10-4z" fill="#3a8cd4"/><ellipse cx="-.500" cy="-1.500" rx="14.700" ry="11" fill="url(#bb)" stroke="#3a88cc" stroke-width=".5"/><ellipse cx="-2" cy="-6" rx="9" ry="3.500" fill="#a8d4f6" opacity=".3"/></g></svg>
<div class="a" style="left:48px;top:562px;width:232px;height:22.5px;background:#e6ebf3"></div>
<div class="hdr" style="left:52px;top:566px;color:#3c4048">试验命令</div>
<svg style="left:250px;top:567px" width="26" height="12"><g fill="none" stroke="#4a4f58" stroke-width="1"><path d="M3.5 2.5h4v5h-4z M2 7.5h7 M5.5 7.5v3"/><path d="M16 2.5l7 7M23 2.5l-7 7" stroke-width="1.2"/></g></svg>
<div class="a" style="left:51.5px;top:588px;width:60.0px;height:60px;background:#f0f0f0;border:1px solid #dcdee2"></div>
<div class="a" style="left:115.5px;top:588px;width:60.0px;height:60px;background:#efefef;border:1px solid #b0b3b9"></div>
<div class="a" style="left:179.5px;top:588px;width:51.0px;height:28.5px;background:linear-gradient(#f1f1f1,#e9e9e9 60%,#e0e0e0);border:1px solid #c3c6cc"></div>
<div class="a" style="left:179.5px;top:621px;width:51.0px;height:27px;background:#f0f0f0;border:1px solid #e3e5e9"></div>
<div class="a" style="left:233.5px;top:588px;width:29.0px;height:28.5px;background:linear-gradient(#f1f1f1,#e9e9e9 60%,#e0e0e0);border:1px solid #c3c6cc"></div>
<div class="a" style="left:233.5px;top:621px;width:29.0px;height:27px;background:linear-gradient(#f1f1f1,#e9e9e9 60%,#e0e0e0);border:1px solid #c3c6cc"></div>
<div class="a" style="left:51.5px;top:652px;width:29.0px;height:28.5px;background:linear-gradient(#f1f1f1,#e9e9e9 60%,#e0e0e0);border:1px solid #c3c6cc"></div>
<div class="a" style="left:83.5px;top:652px;width:29.0px;height:28.5px;background:linear-gradient(#f1f1f1,#e9e9e9 60%,#e0e0e0);border:1px solid #c3c6cc"></div>
<div class="a" style="left:116px;top:652px;width:28.5px;height:28.5px;background:#f0f0f0;border:1px solid #e3e5e9"></div>
<div class="a" style="left:148.5px;top:652px;width:29.0px;height:28.5px;background:linear-gradient(#f1f1f1,#e9e9e9 60%,#e0e0e0);border:1px solid #c3c6cc"></div>
<svg style="left:48px;top:585px" width="236" height="100" viewBox="48 585 236 100">
<defs>
<radialGradient id="pl1" cx="50%" cy="95%" r="70%"><stop offset="0" stop-color="#b4ecf6"/><stop offset=".5" stop-color="#86bcdc"/><stop offset="1" stop-color="#6c9ccc"/></radialGradient>
<linearGradient id="pl2" x1="0" y1="0" x2="0" y2="1"><stop offset="0" stop-color="#b4c8e2" stop-opacity=".95"/><stop offset="1" stop-color="#d4e2f0" stop-opacity=".85"/></linearGradient>
<linearGradient id="st1" x1="0" y1="0" x2="0" y2="1"><stop offset="0" stop-color="#f65a5e"/><stop offset=".35" stop-color="#f2060c"/><stop offset="1" stop-color="#ee0208"/></linearGradient>
<linearGradient id="st2" x1="0" y1="0" x2="0" y2="1"><stop offset="0" stop-color="#fff" stop-opacity=".55"/><stop offset="1" stop-color="#fff" stop-opacity=".08"/></linearGradient>
<linearGradient id="bar" x1="0" y1="0" x2="1" y2="0"><stop offset="0" stop-color="#9a9ae6"/><stop offset=".35" stop-color="#7878d4"/><stop offset="1" stop-color="#2e2e9c"/></linearGradient>
</defs>
<circle cx="81" cy="617.500" r="25.500" fill="url(#pl1)" stroke="#7484c8" stroke-width="1.100"/><path d="M56.200 619a24.800 24.800 0 0 1 49.600 0c-8 -3.500-16 -4.500-24.800 -4.500s-16.800 1-24.800 4.500z" fill="url(#pl2)"/><path d="M73 606.300L73 628.700L92.700 617.500z" fill="#fbfcfe" stroke="#eef3f9" stroke-width=".8" stroke-linejoin="round"/><path d="M172.2 628.6L156.6 644.2L134.6 644.2L119.0 628.6L119.0 606.6L134.6 591.0L156.6 591.0L172.2 606.6z" fill="#d8d8d8" opacity=".7" transform="translate(1 1)"/><path d="M171.7 628.4L156.4 643.7L134.8 643.7L119.5 628.4L119.5 606.8L134.8 591.5L156.4 591.5L171.7 606.8z" fill="#fdfdfd" stroke="#d04040" stroke-width=".8"/><path d="M170.2 627.8L155.8 642.2L135.4 642.2L121.0 627.8L121.0 607.4L135.4 593.0L155.8 593.0L170.2 607.4z" fill="url(#st1)"/><path d="M121.400 612L121.400 607.500L135.500 593.400L155.700 593.400L169.800 607.500L169.800 612z" fill="url(#st2)"/><text x="145.500" y="624.200" text-anchor="middle" font-size="18.500" font-weight="bold" fill="#fff" textLength="38" lengthAdjust="spacingAndGlyphs" style="font-family:'Liberation Sans',sans-serif">STOP</text><circle cx="204.500" cy="602" r="10" fill="#fdfdfe" stroke="#6f86b8" stroke-width="1.600"/><circle cx="204.500" cy="602" r="8" fill="none" stroke="#d5dcec" stroke-width="1"/><path d="M201 598h2.800v8h-2.800zM205.300 598h2.800v8h-2.800z" fill="#2b3f9c"/><circle cx="204.500" cy="634.500" r="10" fill="#f6f8fc" stroke="#a9b9d8" stroke-width="1.500"/><path d="M205.500 629l5 4.500l-5 4.500v-2.800c-3.500 0-5 1.500-6.300 3.800c0-4.500 2.500-7 6.300-7z" fill="#4f8bd6" stroke="#3f76c0" stroke-width=".5"/><rect x="238.0" y="604.5" width="5.2" height="6" fill="url(#bar)" stroke="#34349c" stroke-width=".5"/><rect x="245.0" y="600.5" width="5.2" height="10" fill="url(#bar)" stroke="#34349c" stroke-width=".5"/><rect x="252.0" y="594.5" width="5.2" height="16" fill="url(#bar)" stroke="#34349c" stroke-width=".5"/><rect x="238.0" y="627.5" width="5.2" height="16" fill="url(#bar)" stroke="#34349c" stroke-width=".5"/><rect x="245.0" y="633.5" width="5.2" height="10" fill="url(#bar)" stroke="#34349c" stroke-width=".5"/><rect x="252.0" y="637.5" width="5.2" height="6" fill="url(#bar)" stroke="#34349c" stroke-width=".5"/><rect x="56.0" y="668.5" width="6" height="6" fill="url(#bar)" stroke="#34349c" stroke-width=".5"/><rect x="71.0" y="657.5" width="6" height="17" fill="url(#bar)" stroke="#34349c" stroke-width=".5"/><path d="M56 674.500h22" stroke="#3a3aa2" stroke-width="1"/><text x="66.500" y="670" text-anchor="middle" font-size="11" font-weight="bold" fill="#3030a8">?</text><path d="M87.500 667h4.500l6-11.500l6 11.500h4.500M92 667l6 11.500l6-11.500" fill="none" stroke="#111" stroke-width="1.100" stroke-linejoin="miter"/><path d="M98 661.500v11M95.800 663.800l2.200-3l2.200 3M95.800 670.200l2.200 3l2.200-3" fill="none" stroke="#111" stroke-width="1.300"/><path d="M131.500 664c2-8 4-9 6-5s3 8 5 6" fill="none" stroke="#666" stroke-width="1"/><path d="M124 664v-5h6M128 657l2.500 2l-2.500 2" fill="none" stroke="#666" stroke-width="1"/><path d="M121.500 676v-6l1-3l1.200 3v-5h1.500v5v-4h1.500v4v-3h1.500v9z" fill="#f8dcc0" stroke="#d9a878" stroke-width=".6" opacity=".9"/><path d="M160.500 660.500h12M164.500 665h8M164.500 669.500h8M160.500 674h12" stroke="#222" stroke-width="1.700"/><path d="M160 657h-5v10h5" fill="none" stroke="#2b62c9" stroke-width="1.800"/><path d="M159.500 663.500l4 3.500l-4 3.500z" fill="#2b62c9"/></svg>
<div class="a" style="left:49px;top:685px;width:230px;height:23px;background:#b9c1d0"></div>
<div class="hdr" style="left:52px;top:689px;color:#666c78">试验状态</div>
<svg style="left:250px;top:691px" width="26" height="12"><g fill="none" stroke="#6d7480" stroke-width="1"><path d="M3.5 2.5h4v5h-4z M2 7.5h7 M5.5 7.5v3"/><path d="M16 2.5l7 7M23 2.5l-7 7" stroke-width="1.2"/></g></svg>
<div class="lbl" style="left:52px;top:715px;">试验名称</div>
<div class="inp" style="left:102px;top:713px;width:176px;height:18px"><span style="font-size:14.5px;top:0.8px;left:0.5px">经典冲击试验</span></div>
<div class="lbl" style="left:52px;top:739px;">当前时间</div>
<div class="inp" style="left:102px;top:737px;width:176px;height:18px"><span style="font-size:14.5px;top:1.2px;left:0.5px">2014-6-11, 09:17:53</span></div>
<div class="lbl" style="left:52px;top:763px;">试验进程</div>
<div class="inp" style="left:102px;top:761px;width:176px;height:18px"><span style="font-size:14.5px;top:0.8px;left:0.5px">运行计划表试验 1 - 3</span></div>
<div class="lbl" style="left:52px;top:784.5px;">控制峰值<i> (g)</i></div>
<div class="lbl" style="left:180px;top:784.5px;">目标峰值<i> (g)</i></div>
<div class="inp" style="left:53px;top:800px;width:98px;height:24px"><span style="font-size:23px;top:1.0px;left:0px">4.9997</span></div>
<div class="inp" style="left:180px;top:800px;width:98px;height:24px"><span class="g" style="font-size:23px;top:1.0px;left:1px">5</span></div>
<div class="lbl" style="left:52px;top:830px;">驱动峰值<i>(V)</i></div>
<div class="lbl" style="left:180px;top:830px;">位移峰峰值<i> (mm)</i></div>
<div class="inp" style="left:53px;top:846px;width:98px;height:18px"><span style="font-size:16.5px;top:-0.2px;left:0.7px">0.4777</span></div>
<div class="inp" style="left:180px;top:846px;width:98px;height:18px"><span class="g" style="font-size:16.5px;top:-0.2px;left:0.7px">4.3868</span></div>
<div class="lbl" style="left:52px;top:869px;">量级<i> (%)</i></div>
<div class="lbl" style="left:180px;top:869px;">速度峰值<i> (m/s)</i></div>
<div class="inp" style="left:53px;top:885px;width:98px;height:18px"><span style="font-size:16.5px;top:-0.2px;left:0.7px">100</span></div>
<div class="inp" style="left:180px;top:885px;width:98px;height:18px"><span class="g" style="font-size:16.5px;top:-0.2px;left:0.7px">0.229</span></div>
<div class="lbl" style="left:52px;top:907.5px;">剩余脉冲数</div>
<div class="lbl" style="left:128px;top:907.5px;">试验脉冲数</div>
<div class="lbl" style="left:205px;top:907.5px;">输出脉冲数</div>
<div class="inp" style="left:53px;top:923.5px;width:71px;height:18.0px"><span style="font-size:15px;top:-0.5px;left:0px">86</span></div>
<div class="inp" style="left:129px;top:923.5px;width:72px;height:18.0px"><span style="font-size:15px;top:-0.5px;left:0px">24</span></div>
<div class="inp" style="left:206px;top:923.5px;width:72px;height:18.0px"><span style="font-size:15px;top:-0.5px;left:0px">29</span></div>
<div class="lbl" style="left:52px;top:946px;">试验信息</div>
<div class="btn" style="left:224px;top:944px;width:54px;height:15px;line-height:15px;font-size:12px">信息</div>
<div class="a" style="left:53px;top:962px;width:225px;height:23px;background:#fff"></div>
<div class="a" style="left:263px;top:962px;width:15px;height:23px;background:#f0f0f0"></div>
<svg style="left:265px;top:967px" width="11" height="8"><path d="M1.5 6.5 L5.5 2.5 L9.5 6.5" fill="none" stroke="#c4c4c4" stroke-width="1.3"/></svg>
<div class="a" style="left:284px;top:565px;width:2px;height:420px;background:#8d929a"></div>
<div class="a" style="left:285.5px;top:564px;width:1026.0px;height:421px;background:#adc6e5;border-left:1.2px solid #50555d;border-top:1.2px solid #50555d;border-radius:5px 0 0 0"></div>
<div class="a" style="left:286.7px;top:565.2px;width:1024.8px;height:28.8px;background:linear-gradient(#9db7da 0,#a7c0e0 35%,#b6cde9 70%,#c2d6ed 100%);border-radius:4px 0 0 0"></div>
<div class="a" style="left:289px;top:565.2px;width:1022px;height:1.0px;background:rgba(255,255,255,.35)"></div>
<div class="t mono" style="left:760px;top:576px;font-size:14px;color:#111;transform:translate(-50%,0);letter-spacing:0.4px">默认窗口</div>
<svg style="left:294px;top:575px" width="16" height="14"><path d="M6.5 1.8C3.5 3 1.6 5.500 1.800 8c.200 2 1.500 3.500 4 4.200C4 10.500 3.600 8.500 4.300 6.500C4.800 5 5.500 3.500 6.500 1.800z" fill="#7f9fd2"/><path d="M9.500 1.500c3 .500 5 3 5.200 6.200c.100 2.500-.600 4-2 5c-1.500-.300-3.200-1.500-5-3.700l-2-2.500C7 5.500 8.500 3.500 9.500 1.500z" fill="#2f4590"/><path d="M8.300 1.600L5 6.600l3 4" fill="none" stroke="#f4f7fc" stroke-width="1.300"/></svg>
<div class="a" style="left:1211px;top:574px;width:30px;height:16px;background:linear-gradient(#c8d9ee,#a9c1df 50%,#96b2d6 51%,#b5cbe6);border:1px solid #6b84a6;border-radius:3px;box-shadow:inset 0 0 0 1px rgba(255,255,255,.45)"></div>
<div class="a" style="left:1243px;top:574px;width:29px;height:16px;background:linear-gradient(#c8d9ee,#a9c1df 50%,#96b2d6 51%,#b5cbe6);border:1px solid #6b84a6;border-radius:3px;box-shadow:inset 0 0 0 1px rgba(255,255,255,.45)"></div>
<div class="a" style="left:1274px;top:574px;width:30px;height:16px;background:linear-gradient(#e3a696,#d0624c 50%,#c2402a 51%,#d7654e);border:1px solid #7e3a30;border-radius:3px;box-shadow:inset 0 0 0 1px rgba(255,255,255,.45)"></div>
<svg style="left:1211px;top:574px" width="94" height="16"><rect x="10.500" y="8.500" width="9" height="3" rx="1" fill="#fff" stroke="#47586e" stroke-width="1"/><rect x="42.500" y="4.500" width="8" height="7" fill="#fff" stroke="#47586e"/><rect x="44.500" y="6.500" width="4" height="3" fill="#8aa3c4" stroke="#47586e" stroke-width=".8"/><path d="M74.700 5.300l6 5.200M80.700 5.300l-6 5.200" stroke="#6a2a20" stroke-width="3.800" stroke-linecap="round"/><path d="M74.700 5.300l6 5.200M80.700 5.300l-6 5.200" stroke="#fff" stroke-width="2.200" stroke-linecap="round"/></svg>
<div class="a" style="left:293.8px;top:593.3px;width:1010.2px;height:364.7px;background:#fff;border-left:1.2px solid #7b8089;border-top:1.6px solid #666b73"></div>
<div class="a" style="left:295px;top:958px;width:1009px;height:4.3px;background:linear-gradient(#fff,#ececec)"></div>
<div class="a" style="left:293.8px;top:962.3px;width:1010.2px;height:22.7px;background:#fff;border-top:2px solid #777;border-left:1.2px solid #7b8089"></div>
<div class="a" style="left:1304px;top:594px;width:2px;height:391px;background:#d6e5f5"></div>
<svg style="left:0;top:560px" width="1360" height="425" viewBox="0 560 1360 425">
<g stroke="#dcdcdc" stroke-width="1" fill="none"><path d="M410.5 622.5V929.3"/><path d="M495.5 622.5V929.3"/><path d="M579.5 622.5V929.3"/><path d="M664.5 622.5V929.3"/><path d="M748.5 622.5V929.3"/><path d="M833.5 622.5V929.3"/><path d="M917.5 622.5V929.3"/><path d="M1002.5 622.5V929.3"/><path d="M1086.5 622.5V929.3"/><path d="M1171.5 622.5V929.3"/><path d="M1255.5 622.5V929.3"/><path d="M342.4 630.5H1276.1"/><path d="M342.4 704.5H1276.1"/><path d="M342.4 779.5H1276.1"/><path d="M342.4 853.5H1276.1"/><path d="M342.4 622.5H1276.1M342.4 924.5H1276.1"/><path d="M347.5 622.5V929.3M1276.5 622.5V929.3" stroke="#d2d2d2"/></g>
<path d="M347.4 844.0L546.0 844.0L664.3 825.9L669.3 816.0L674.2 806.4L679.2 796.9L684.2 787.4L689.2 778.1L694.1 768.9L699.1 759.8L704.1 750.9L709.0 742.3L714.0 733.8L719.0 725.6L724.0 717.6L728.9 709.9L733.9 702.6L738.9 695.5L743.8 688.8L748.8 682.5L753.8 676.5L758.8 671.0L763.7 665.8L768.7 661.1L773.7 656.8L778.6 653.0L783.6 649.6L788.6 646.7L793.6 644.3L798.5 642.3L803.5 640.8L808.5 639.9L813.4 639.4L818.4 639.4L823.4 639.9L828.4 640.9L833.3 642.4L838.3 644.3L843.3 646.8L848.2 649.7L853.2 653.1L858.2 657.0L863.2 661.3L868.1 666.0L873.1 671.1L878.1 676.7L883.0 682.7L888.0 689.0L893.0 695.7L898.0 702.8L902.9 710.1L907.9 717.8L912.9 725.8L917.8 734.0L922.8 742.5L927.8 751.2L932.8 760.1L937.7 769.2L942.7 778.4L947.7 787.7L952.6 797.2L957.6 806.7L962.6 816.2L1276.1 816.2" fill="none" stroke="#c8363c" stroke-width="1.1" stroke-linejoin="round"/>
<path d="M347.4 863.0L546.0 863.0L664.3 881.1L669.4 871.7L674.4 862.0L679.5 852.3L684.5 842.7L689.6 833.2L694.6 823.9L699.7 814.7L704.7 805.7L709.8 796.9L714.8 788.3L719.9 780.0L724.9 772.0L730.0 764.2L735.0 756.8L740.1 749.7L745.1 743.0L750.2 736.7L755.2 730.8L760.3 725.2L765.3 720.1L770.4 715.5L775.4 711.3L780.5 707.6L785.5 704.3L790.6 701.5L795.6 699.3L800.7 697.5L805.8 696.2L810.8 695.4L815.9 695.2L820.9 695.4L826.0 696.2L831.0 697.5L836.1 699.3L841.1 701.5L846.2 704.3L851.2 707.6L856.3 711.3L861.3 715.5L866.4 720.1L871.4 725.2L876.5 730.8L881.5 736.7L886.6 743.0L891.6 749.7L896.7 756.8L901.7 764.2L906.8 772.0L911.8 780.0L916.9 788.3L921.9 796.9L927.0 805.7L932.0 814.7L937.1 823.9L942.2 833.2L947.2 842.7L952.3 852.3L957.3 862.0L962.4 871.7L967.4 881.4L969.9 890.8L972.8 908.6L1276.1 908.6" fill="none" stroke="#c8363c" stroke-width="1.1" stroke-linejoin="round"/>
<path d="M347.4 859.8L596.7 853.5L664.3 853.5L669.4 843.8L674.4 834.0L679.5 824.4L684.5 814.8L689.6 805.3L694.6 795.9L699.7 786.8L704.7 777.7L709.8 768.9L714.8 760.4L719.9 752.1L724.9 744.0L730.0 736.3L735.0 728.9L740.1 721.8L745.1 715.1L750.2 708.8L755.2 702.8L760.3 697.3L765.3 692.2L770.4 687.6L775.4 683.4L780.5 679.6L785.5 676.4L790.6 673.6L795.6 671.3L800.7 669.5L805.8 668.3L810.8 667.5L815.9 667.2L820.9 667.5L826.0 668.3L831.0 669.5L836.1 671.3L841.1 673.6L846.2 676.4L851.2 679.6L856.3 683.4L861.3 687.6L866.4 692.2L871.4 697.3L876.5 702.8L881.5 708.8L886.6 715.1L891.6 721.8L896.7 728.9L901.7 736.3L906.8 744.0L911.8 752.1L916.9 760.4L921.9 768.9L927.0 777.7L932.0 786.8L937.1 795.9L942.2 805.3L947.2 814.8L952.3 824.4L957.3 834.0L962.4 843.8L967.4 853.5L967.7 852.8L984.0 858.5L1000.6 864.2L1018.4 869.9L1036.4 875.4L1055.9 880.3L1073.9 884.0L1085.4 885.2L1093.9 885.7L1276.1 885.7" fill="none" stroke="#2a2ac4" stroke-width="1.2" stroke-linejoin="round"/>
<text class="mono" x="335" y="614.5" text-anchor="middle" font-size="13" fill="#111">g</text><text class="ax" x="339" y="626.5" text-anchor="end">6.2</text><text class="ax" x="339" y="708.5" text-anchor="end">4</text><text class="ax" x="339" y="783.0" text-anchor="end">2</text><text class="ax" x="339" y="857.5" text-anchor="end">0</text><text class="ax" x="339" y="928.3" text-anchor="end">-1.9</text><text class="ax" x="347.4" y="942" text-anchor="middle">-11.25</text><text class="ax" x="410.8" y="942" text-anchor="middle">-9</text><text class="ax" x="495.3" y="942" text-anchor="middle">-6</text><text class="ax" x="579.8" y="942" text-anchor="middle">-3</text><text class="ax" x="664.3" y="942" text-anchor="middle">0</text><text class="ax" x="748.8" y="942" text-anchor="middle">3</text><text class="ax" x="833.3" y="942" text-anchor="middle">6</text><text class="ax" x="917.8" y="942" text-anchor="middle">9</text><text class="ax" x="1002.3" y="942" text-anchor="middle">12</text><text class="ax" x="1086.8" y="942" text-anchor="middle">15</text><text class="ax" x="1171.4" y="942" text-anchor="middle">18</text><text class="ax" x="1276.1" y="942" text-anchor="middle">21.719</text><text class="mono" x="1268.5" y="954.5" text-anchor="middle" font-size="13" fill="#111" style="letter-spacing:-1px">ms</text><text x="811" y="614.5" text-anchor="middle" font-size="12.800" fill="#111" class="mono" style="letter-spacing:1.700px">时域</text><text x="811" y="983.5" text-anchor="middle" font-size="12.800" fill="#111" class="mono" style="letter-spacing:1.700px">时域</text><text class="ax" x="335" y="982.5" text-anchor="middle" font-size="12">V</text><rect x="1223.5" y="596.5" width="78.500" height="85.500" fill="#fff" stroke="#dadada"/><text x="1232.500" y="613.8" font-size="12.800" fill="#24de24" class="mono" style="letter-spacing:1.700px">目标<tspan dx="-0.300" font-size="12" style="letter-spacing:-0.300px">(t)</tspan></text><text x="1232.500" y="634.2" font-size="12.800" fill="#de1c1c" class="mono" style="letter-spacing:1.700px">高中断<tspan dx="-0.300" font-size="12" style="letter-spacing:-0.300px">(t)</tspan></text><text x="1232.500" y="654.6" font-size="12.800" fill="#de1c1c" class="mono" style="letter-spacing:1.700px">低中断<tspan dx="-0.300" font-size="12" style="letter-spacing:-0.300px">(t)</tspan></text><text x="1232.500" y="675.2" font-size="12.800" fill="#1616d0" class="mono" style="letter-spacing:1.700px">控制<tspan dx="-0.300" font-size="12" style="letter-spacing:-0.300px">(t)</tspan></text><path d="M1225.500 670.500l2 2.500l3-5" stroke="#111" stroke-width="1.300" fill="none"/><rect x="1237.500" y="968.500" width="64.500" height="21" fill="#fff" stroke="#dadada"/><path d="M1239.500 979.500l2 2.500l3-5" stroke="#111" stroke-width="1.300" fill="none"/><text x="1246" y="983.500" font-size="12.800" fill="#111" class="mono" style="letter-spacing:1.700px">驱动<tspan dx="-0.300" font-size="12" style="letter-spacing:-0.300px">(t)</tspan></text></svg>
</body></html>
